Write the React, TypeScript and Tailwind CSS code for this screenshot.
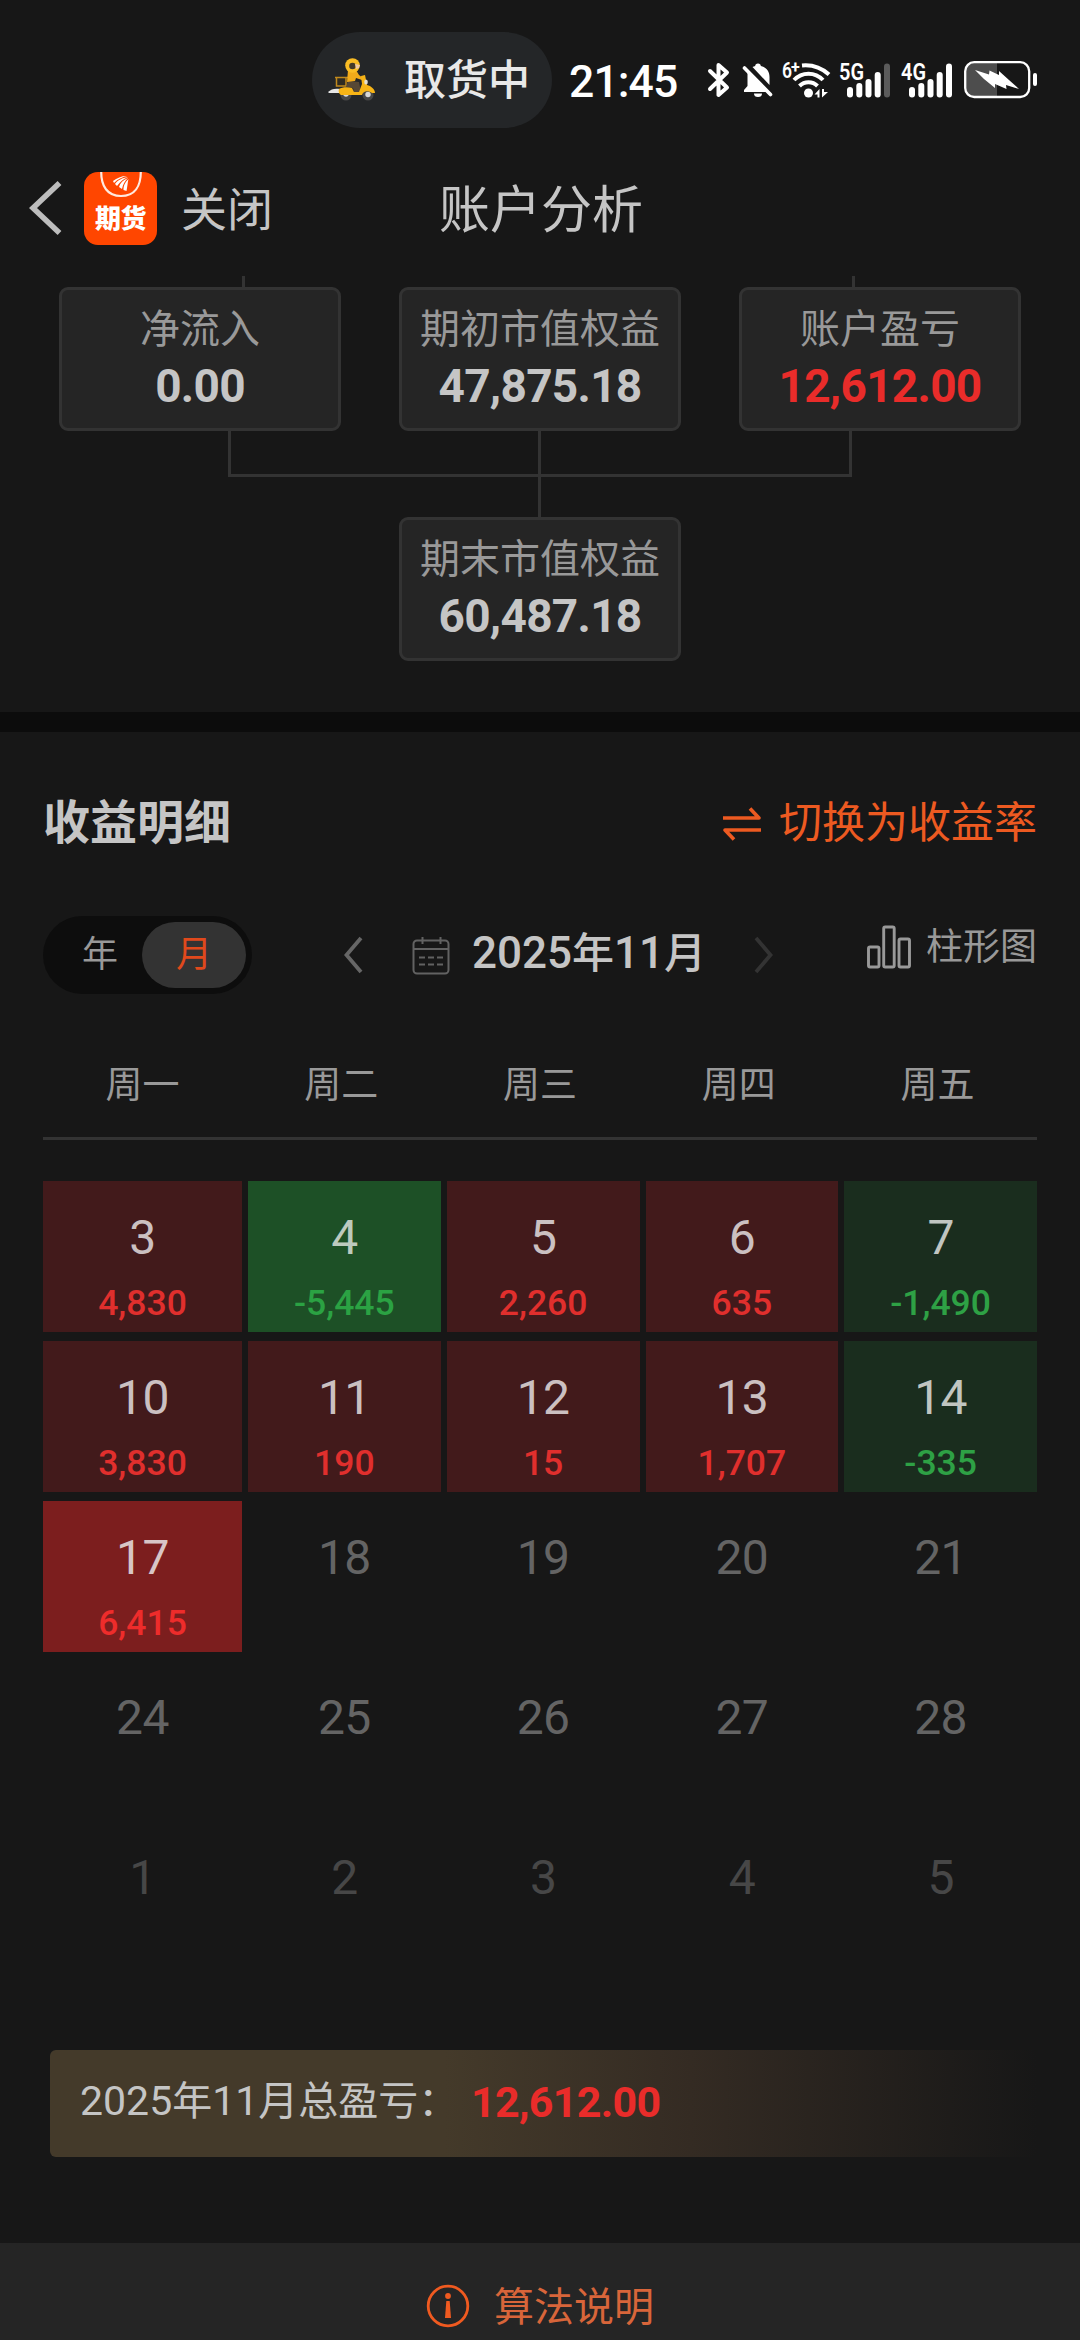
import React from "react";

const LINE = "bg-[#333333]";

function Scooter() {
  return (
    <svg width="48" height="44" viewBox="0 0 48 44" fill="none">
      <path d="M0 34c3-3 7-4 12-3v4H1z" fill="#e6e6e6" />
      <circle cx="18" cy="37" r="5.500" fill="#474747" />
      <circle cx="18" cy="36" r="2.700" fill="#d8d8d8" />
      <circle cx="40" cy="37" r="5.500" fill="#474747" />
      <circle cx="40" cy="36.500" r="2.700" fill="#d8d8d8" />
      <path d="M8 20h11v8H9z" fill="#2f2b22" />
      <path d="M7 19.500h13M8.500 20v8h9.500v-8" stroke="#c28a1c" strokeWidth="1.500" />
      <path d="M20 23l11 1 1 5v5h-6l-1-4-7-1z" fill="#574835" />
      <path d="M20 12h8l3 5 4 3-1 2-6-2-1 3-8 1z" fill="#f2ab1b" />
      <path d="M11 31c3-2 9-2 13-1l2 4h5l3-8-1-8 4-1 2 10c4 1 8 4 8 8h-3c-4-3-9-2-10 2H13c-2-1-3-4-2-6z" fill="#f7b416" />
      <circle cx="24.500" cy="7.500" r="7.300" fill="#fbbd24" />
      <circle cx="24.500" cy="8" r="3.300" fill="#463a28" />
      <path d="M27 6l5 1-1 3-3 1z" fill="#f0c9a6" />
      <ellipse cx="38" cy="24" rx="1.800" ry="2.600" fill="#e3ddd0" />
    </svg>
  );
}

function Bluetooth() {
  return (
    <svg width="24" height="36" viewBox="0 0 24 36" fill="none" stroke="#fff" strokeWidth="4" strokeLinejoin="round" strokeLinecap="round">
      <path d="M3 9l17 16.500-8.500 7.500V3L20 10.500 3 27" />
    </svg>
  );
}

function BellOff() {
  return (
    <svg width="32" height="36" viewBox="0 0 32 36" fill="none">
      <path d="M16 1.500c1.800 0 2.800 1 2.800 2.500C24.500 5.500 27.500 9.500 27.500 15v8L10.500 5c1-.5 1.700-.8 2.700-1 0-1.500 1-2.500 2.800-2.500z" fill="#fff" />
      <path d="M5.500 9.500L26 30H2v-2l3.500-4z" fill="#fff" />
      <path d="M12 31.500h8a4 3.500 0 01-8 0z" fill="#fff" />
      <path d="M2.500 6L28.500 32.500" stroke="#fff" strokeWidth="3.600" strokeLinecap="round" />
    </svg>
  );
}

function Wifi() {
  return (
    <svg width="50" height="38" viewBox="0 0 50 38" fill="none" className="overflow-visible">
      <text x="0" y="17" fontSize="22" fontWeight="600" fontFamily="Roboto" fill="#fff" textLength="10" lengthAdjust="spacingAndGlyphs">6</text>
      <text x="9" y="12" fontSize="16" fontWeight="700" fontFamily="Roboto" fill="#fff">+</text>
      <g stroke="#fff" strokeWidth="4">
        <path d="M20 4.500c10-1 19 2 27 9" />
        <path d="M12 19c8-8.500 21-8.500 29 0" />
        <path d="M17.500 25c5-5 13-5 18 0" />
      </g>
      <circle cx="26.500" cy="32" r="4.500" fill="#fff" />
      <path d="M32.500 33.500l5-5.500v8.500h-2v-3zM40 36.500V28h2v3h4z" fill="#fff" />
    </svg>
  );
}

function Signal({ label, last }: { label: string; last: string }) {
  return (
    <svg width="51" height="36" viewBox="0 0 51 36" className="overflow-visible">
      <text x="-1" y="17.500" fontSize="23" fontWeight="600" fontFamily="Roboto" fill="#fff" textLength="25" lengthAdjust="spacingAndGlyphs">{label}</text>
      <g fill="#fff">
        <rect x="7" y="25" width="6" height="10.500" rx="3" />
        <rect x="16.300" y="21" width="6" height="14.500" rx="3" />
        <rect x="25.500" y="17" width="6" height="18.500" rx="3" />
        <rect x="34.700" y="10" width="6" height="25.500" rx="3" />
        <rect x="44" y="1.500" width="6" height="34" rx="3" fill={last} />
      </g>
    </svg>
  );
}

function Battery() {
  return (
    <svg width="74" height="38" viewBox="0 0 74 38">
      <path d="M10 2h23v34H10a8 8 0 01-8-8V10a8 8 0 018-8z" fill="#4d4d4d" />
      <rect x="1.200" y="1.200" width="64" height="34.800" rx="9" fill="none" stroke="#fff" strokeWidth="2.300" />
      <rect x="69" y="12" width="4" height="13" rx="2" fill="#fff" />
      <path d="M11 9l14 4.500.500-4L35 14v-4l10 9 10 9-13-4 .500 4L31 23v4L20 18z" fill="#fff" />
    </svg>
  );
}

function AppBadge() {
  return (
    <div className="flex h-[73px] w-[73px] flex-col items-center overflow-hidden rounded-[14px] bg-[#ff4600]">
      <svg width="42" height="26" viewBox="0 0 42 26" fill="none">
        <path d="M1.200 0c0 14 6 24 19.800 24S40.800 14 40.800 0" stroke="#ffe9df" strokeWidth="2.200" />
        <path d="M13 9c4-3 8-5 14-5-5 1-9 3-13 7zM15 12c3-4 7-6 13-7-5 2-8 5-11 9zM19 15c1-4 4-7 9-9-3 3-5 6-6 11zM23.500 18c0-4 1-7 5-11-1 4-1 7-2 12z" fill="#fff" />
      </svg>
      <span className="mt-[6px] text-[26px] leading-[30px] font-black tracking-[-0.500px] text-white">期货</span>
    </div>
  );
}

function Card({ label, value, red }: { label: string; value: string; red?: boolean }) {
  return (
    <div className="h-[144px] w-[282px] rounded-[9px] border-[3px] border-[#333333] bg-[#252525] pt-3 text-center">
      <div className="text-[40px] leading-[56px] text-[#999999]">{label}</div>
      <div className={red ? "text-[46px] leading-[56px] font-bold tracking-[-0.700px] text-[#e92c2a]" : "text-[46px] leading-[56px] font-bold tracking-[-0.700px] text-[#c5c5c5]"}>{value}</div>
    </div>
  );
}

function Chevron({ className, flip }: { className: string; flip?: boolean }) {
  return (
    <svg width="20" height="38" viewBox="0 0 20 38" fill="none" stroke="currentColor" strokeWidth="3.800" className={className}>
      <path d={flip ? "M2 2l14.500 17L2 36" : "M18 2L3.500 19 18 36"} />
    </svg>
  );
}

type Day = { d: number; v?: string; tone: "loss2" | "loss1" | "gain1" | "gain2" | "idle" | "next" };

const days: Day[] = [
  { d: 3, v: "4,830", tone: "gain1" },
  { d: 4, v: "-5,445", tone: "loss2" },
  { d: 5, v: "2,260", tone: "gain1" },
  { d: 6, v: "635", tone: "gain1" },
  { d: 7, v: "-1,490", tone: "loss1" },
  { d: 10, v: "3,830", tone: "gain1" },
  { d: 11, v: "190", tone: "gain1" },
  { d: 12, v: "15", tone: "gain1" },
  { d: 13, v: "1,707", tone: "gain1" },
  { d: 14, v: "-335", tone: "loss1" },
  { d: 17, v: "6,415", tone: "gain2" },
  ...[18, 19, 20, 21, 24, 25, 26, 27, 28].map((d): Day => ({ d, tone: "idle" })),
  ...[1, 2, 3, 4, 5].map((d): Day => ({ d, tone: "next" })),
];

const cellTone = {
  gain1: "bg-[#421a1b] text-[#cbc0c1]",
  gain2: "bg-[#7c1e1e] text-[#d8c5c6]",
  loss1: "bg-[#1a2d1e] text-[#c0c5c1]",
  loss2: "bg-[#1d5026] text-[#bccabe]",
  idle: "text-[#646464]",
  next: "text-[#474747]",
};

const valueTone = {
  gain1: "text-[#e02f2d]",
  gain2: "text-[#ee2c2b]",
  loss1: "text-[#2ea145]",
  loss2: "text-[#2ba243]",
  idle: "",
  next: "",
};

export default function App() {
  return (
    <div className="h-[2340px] w-[1080px] overflow-hidden bg-[#171717] font-['Roboto','Noto_Sans_CJK_SC',sans-serif] text-[#c5c5c5]">
      <div className="flex h-[160px] items-center pl-[312px]">
        <div className="flex h-24 w-60 items-center rounded-full bg-[#242628] pl-4">
          <Scooter />
          <span className="mt-0.5 ml-[28px] text-[42px] leading-[56px] font-medium whitespace-nowrap text-[#e8e8e8]">取货中</span>
        </div>
        <span className="ml-[17px] w-[108px] pt-1 text-[44.500px] leading-[56px] font-medium tracking-[-0.900px] whitespace-nowrap text-white">21:45</span>
        <div className="ml-[30px] flex items-center">
          <Bluetooth />
          <div className="ml-[11px] flex"><BellOff /></div>
          <div className="ml-2 flex"><Wifi /></div>
          <div className="ml-2 flex"><Signal label="5G" last="#5b5b5b" /></div>
          <div className="ml-[11px] flex"><Signal label="4G" last="#ffffff" /></div>
          <div className="ml-[11px] flex"><Battery /></div>
        </div>
      </div>

      <header className="flex h-[116px] items-start pl-[29px]">
        <svg width="34" height="56" viewBox="0 0 34 56" fill="none" stroke="#bdbdbd" strokeWidth="5.500" className="mt-[20px]">
          <path d="M30.500 3L4 28l26.500 25" />
        </svg>
        <div className="mt-3 ml-[21px]"><AppBadge /></div>
        <span className="mt-[22px] ml-6 text-[46px] leading-[56px]">关闭</span>
        <h1 className="mt-[23px] ml-[166px] text-[51px] leading-[56px]">账户分析</h1>
      </header>

      <section>
        <div className="flex h-[11px] pl-[242px]">
          <div className={`w-[3px] ${LINE}`} />
          <div className={`ml-[607px] w-[3px] ${LINE}`} />
        </div>
        <div className="flex gap-[58px] pl-[59px]">
          <Card label="净流入" value="0.00" />
          <Card label="期初市值权益" value="47,875.18" />
          <Card label="账户盈亏" value="12,612.00" red />
        </div>
        <div className="ml-[228px] h-[46px] w-[624px] border-x-[3px] border-b-[3px] border-[#333333] pl-[307px]">
          <div className={`h-full w-[3px] ${LINE}`} />
        </div>
        <div className={`ml-[538px] h-10 w-[3px] ${LINE}`} />
        <div className="pl-[399px]">
          <Card label="期末市值权益" value="60,487.18" />
        </div>
      </section>

      <div className="mt-[51px] h-5 bg-[#0c0c0c]" />

      <section className="px-[43px]">
        <div className="flex h-[184px] items-center justify-between pb-[3px]">
          <h2 className="text-[47px] leading-[56px] font-bold">收益明细</h2>
          <div className="flex items-center text-[#ed5a21]">
            <svg width="38" height="34" viewBox="0 0 38 34" fill="none" stroke="currentColor" strokeWidth="3.600" strokeLinejoin="round" className="mt-[3px]">
              <path d="M0 11h36L27 1.500M38 23H2l9 9.500" />
            </svg>
            <span className="ml-[18px] text-[43px] leading-[56px]">切换为收益率</span>
          </div>
        </div>

        <div className="flex h-[78px] items-center">
          <div className="flex h-[78px] w-[209px] items-center rounded-full bg-[#0d0d0d] pr-1.5 text-[36px] leading-none">
            <span className="w-[99px] pl-[39px] text-[#999999]">年</span>
            <span className="flex h-[66px] w-[104px] items-center justify-center rounded-full bg-[#333333] text-[#e0491c]">月</span>
          </div>
          <Chevron className="ml-[91px] text-[#666666]" />
          <svg width="38" height="39" viewBox="0 0 38 39" fill="none" stroke="#626262" strokeWidth="2" className="ml-[49px]">
            <rect x="1.500" y="4.500" width="35" height="33" rx="3.500" />
            <path d="M1.500 13h35M10.500 1v7M28.500 1v7" />
            <path d="M7 21.500h6M16 21.500h6M25 21.500h6M7 28.500h6M16 28.500h6M25 28.500h6" strokeWidth="2.200" />
          </svg>
          <div className="ml-[22px] w-[232px] pb-[3px] text-[44px] leading-[56px] font-medium whitespace-nowrap">
            2025<span className="text-[42px]">年</span>11<span className="text-[42px]">月</span>
          </div>
          <Chevron className="ml-[50px] text-[#333333]" flip />
          <div className="-mt-4 ml-[93px] flex items-center text-[#999999]">
            <svg width="44" height="44" viewBox="0 0 44 44" fill="none" stroke="currentColor" strokeWidth="2.900">
              <rect x="1.500" y="22" width="10.500" height="20" rx="1.500" />
              <rect x="16.700" y="2" width="10.500" height="40" rx="1.500" />
              <rect x="32" y="14" width="10.500" height="28" rx="1.500" />
            </svg>
            <span className="ml-[15px] text-[37px] leading-none whitespace-nowrap">柱形图</span>
          </div>
        </div>

        <div className="grid h-[146px] grid-cols-5 items-center border-b-[3px] border-[#333333] pt-10 text-center text-[37px] leading-none text-[#999999]">
          {["周一", "周二", "周三", "周四", "周五"].map((w) => (
            <span key={w}>{w}</span>
          ))}
        </div>

        <div className="mt-[41px] grid auto-rows-[151px] grid-cols-[199px_repeat(4,192.75px)] gap-x-1.5 gap-y-[9px] text-center">
          {days.map((x, i) => (
            <div key={i} className={`pt-[29px] ${cellTone[x.tone]}`}>
              <div className="text-[48px] leading-[56px] tracking-[-0.500px]">{x.d}</div>
              {x.v && <div className={`mt-[17px] text-[35.500px] leading-10 font-medium ${valueTone[x.tone]}`}>{x.v}</div>}
            </div>
          ))}
        </div>

        <div className="mt-[78px] ml-[7px] flex h-[107px] items-center rounded-[6px] bg-linear-to-r from-[#443a2a] from-40% via-[#342b23] via-65% to-[#171717] pb-1 pl-[30px] text-[41px] leading-[56px] whitespace-nowrap">
          <div className="w-[391px]">
            2025<span className="text-[40px]">年</span>11<span className="text-[40px]">月总盈亏：</span>
          </div>
          <span className="text-[43px] font-bold tracking-[-0.700px] text-[#e92c2a]">12,612.00</span>
        </div>
      </section>

      <footer className="mt-[86px] flex h-[97px] items-center justify-center bg-[#252525] pt-8">
        <svg width="44" height="44" viewBox="0 0 44 44" fill="none" className="-mt-1">
          <circle cx="22" cy="22" r="19.800" stroke="#f05a20" strokeWidth="2.800" />
          <circle cx="22" cy="12" r="2.900" fill="#f05a20" />
          <path d="M20.300 17h3.400l1.300 17h-6z" fill="#f05a20" />
        </svg>
        <span className="ml-6 text-[40px] leading-none text-[#d8653a]">算法说明</span>
      </footer>
    </div>
  );
}
